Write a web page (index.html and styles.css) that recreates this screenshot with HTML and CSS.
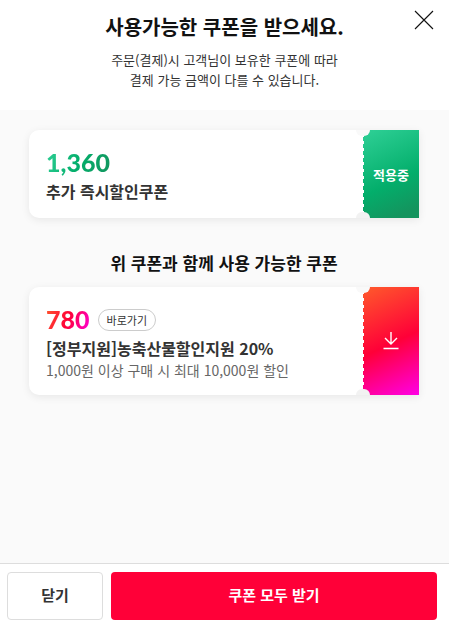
FILE: index.html
```html
<!DOCTYPE html>
<html lang="ko">
<head>
<meta charset="UTF-8">
<meta name="viewport" content="width=device-width, initial-scale=1">
<title>쿠폰 받기</title>
<link rel="stylesheet" href="styles.css">
</head>
<body>

<div class="layer">
	<header class="layer_head">
		<h1 class="title">사용가능한 쿠폰을 받으세요.</h1>
		<p class="guide">주문(결제)시 고객님이 보유한 쿠폰에 따라<br>결제 가능 금액이 다를 수 있습니다.</p>
		<button type="button" class="btn_x" aria-label="닫기">
			<svg width="20" height="20" viewBox="0 0 20 20"><path d="M1 1L19 19M19 1L1 19" fill="none" stroke="#111" stroke-width="1.1"/></svg>
		</button>
	</header>

	<main class="layer_body">
		<div class="coupon coupon_green">
			<div class="info">
				<div class="price_row"><strong class="price">1,360</strong></div>
				<p class="name">추가 즉시할인쿠폰</p>
			</div>
			<div class="stub"><span>적용중</span></div>
		</div>

		<h2 class="sub_title">위 쿠폰과 함께 사용 가능한 쿠폰</h2>

		<div class="coupon coupon_red">
			<div class="info">
				<div class="price_row"><strong class="price">780</strong><a class="btn_go" href="#">바로가기</a></div>
				<p class="name">[정부지원]농축산물할인지원 20%</p>
				<p class="desc">1,000원 이상 구매 시 최대 10,000원 할인</p>
			</div>
			<button type="button" class="stub" aria-label="쿠폰 받기">
				<svg width="16" height="18" viewBox="0 0 16 18"><path d="M8 0V12M2 6L8 12L14 6M0.500 16.500H15.500" fill="none" stroke="#fff" stroke-width="1.400"/></svg>
			</button>
		</div>
	</main>

	<footer class="layer_foot">
		<button type="button" class="btn btn_close">닫기</button>
		<button type="button" class="btn btn_all">쿠폰 모두 받기</button>
	</footer>
</div>

</body>
</html>
```
FILE: styles.css
```css
* {
	margin: 0;
	padding: 0;
	box-sizing: border-box;
}
body {
	font-family: "Noto Sans CJK KR", sans-serif;
	font-size: 14px;
	color: #111;
	background: #fafafa;
}
button {
	border: 0;
	background: none;
	font-family: inherit;
	cursor: pointer;
}
.layer {
	display: flex;
	flex-direction: column;
	min-height: 100vh;
}

/* header */
.layer_head {
	position: relative;
	padding: 12px 40px 20px;
	background: #fff;
	text-align: center;
}
.title {
	font-size: 20px;
	line-height: 30px;
	font-weight: 700;
}
.guide {
	margin-top: 8px;
	font-size: 13px;
	line-height: 20px;
	color: #333;
}
.btn_x {
	position: absolute;
	top: 10px;
	right: 15px;
	width: 20px;
	height: 20px;
}
.btn_x svg,
.stub svg {
	display: block;
}

/* coupon list */
.layer_body {
	flex: 1;
	padding: 20px 30px 20px 29px;
}
.sub_title {
	padding: 32px 0 11px;
	font-size: 17px;
	line-height: 26px;
	font-weight: 700;
	text-align: center;
}
.coupon {
	position: relative;
	display: flex;
	border-radius: 10px 0 0 10px;
	background: #fff;
	box-shadow: 0 2px 8px rgba(0, 0, 0, .08);
}
.info {
	flex: 1;
	padding: 17px 0 15px 17px;
}
.price_row {
	display: flex;
	align-items: center;
	gap: 8px;
	height: 32px;
}
.price {
	padding-bottom: 2px;
	font-family: Lato, "Noto Sans CJK KR", sans-serif;
	font-size: 25px;
	line-height: 30px;
	font-weight: 900;
	color: transparent;
	background-clip: text;
	-webkit-background-clip: text;
}
.name {
	font-size: 16px;
	line-height: 24px;
	font-weight: 700;
	color: #333;
}
.desc {
	font-size: 14px;
	line-height: 20px;
	color: #666;
}
.btn_go {
	height: 22px;
	padding: 0 8px;
	border: 1px solid #ccc;
	border-radius: 11px;
	font-size: 11px;
	line-height: 20px;
	color: #333;
	text-decoration: none;
}
.stub {
	position: relative;
	display: flex;
	align-items: center;
	justify-content: center;
	width: 56px;
	font-size: 13px;
	font-weight: 700;
	color: #fff;
}
.coupon_green .stub {
	background: linear-gradient(155deg, #2fd096, #03ae6b 58%, #14945e 90%);
}
.coupon_red .stub {
	background: linear-gradient(155deg, #ff5a2b, #ff0038 52%, #ff00e6);
}
.coupon_green .price {
	background-image: linear-gradient(110deg, #2fd096, #03ae6b 50%, #14945e);
}
.coupon_red .price {
	background-image: linear-gradient(110deg, #ff5a2b, #ff0038 50%, #ff00e6);
}

/* tear line */
.stub::before {
	content: "";
	position: absolute;
	top: 0;
	bottom: 0;
	left: 0;
	width: 1px;
	background: repeating-linear-gradient(transparent 0 4px, #fff 4px 7px);
}
.coupon::before,
.coupon::after {
	content: "";
	position: absolute;
	z-index: 1;
	right: 49px;
	width: 14px;
	height: 6px;
	background: #f9f9f9;
}
.coupon::before {
	top: 0;
	border-radius: 0 0 7px 7px;
}
.coupon::after {
	bottom: 0;
	border-radius: 7px 7px 0 0;
	background: #f2f2f2;
}

/* bottom buttons */
.layer_foot {
	display: flex;
	gap: 8px;
	padding: 8px 12px 2px 7px;
	border-top: 1px solid #ddd;
	background: #fff;
}
.btn {
	height: 48px;
	padding-bottom: 4px;
	border-radius: 4px;
	font-size: 15px;
	font-weight: 700;
}
.btn_close {
	width: 96px;
	border: 1px solid #ddd;
	color: #333;
}
.btn_all {
	flex: 1;
	color: #fff;
	background: #ff0038;
}
```
